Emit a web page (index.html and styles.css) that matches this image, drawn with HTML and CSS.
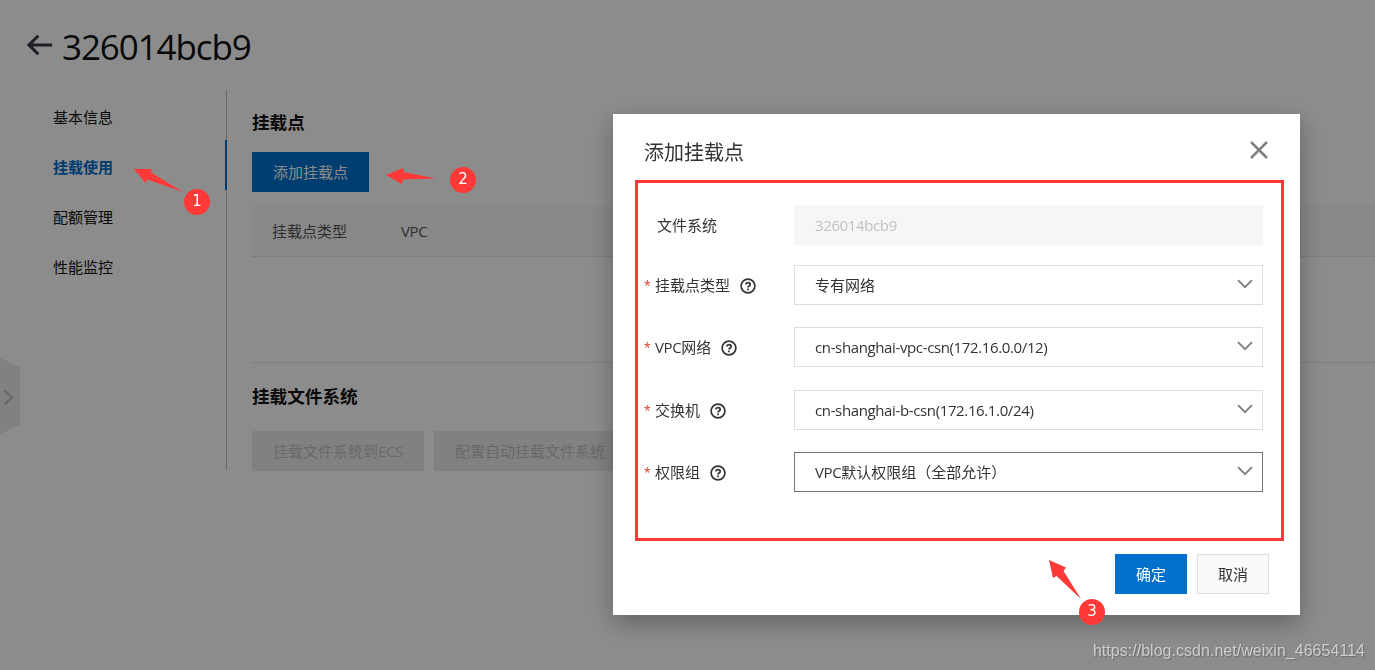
FILE: index.html
```html
<!DOCTYPE html>
<html lang="zh-CN">
<head>
    <meta charset="UTF-8">
    <meta name="viewport" content="width=device-width, initial-scale=1.0">
    <title>添加挂载点</title>
    <link rel="stylesheet" href="styles.css">
</head>
<body>
    <header class="page-header">
        <svg class="back-icon" width="26" height="22" viewBox="0 0 26 22">
            <path d="M1.8 11H25.2M11.3 1.8L2 11l9.3 9.2" fill="none" stroke="#333a44" stroke-width="3"/>
        </svg>
        <h1>326014bcb9</h1>
    </header>

    <div class="layout">
        <nav class="side-nav">
            <a class="nav-item">基本信息</a>
            <a class="nav-item active">挂载使用</a>
            <a class="nav-item">配额管理</a>
            <a class="nav-item">性能监控</a>
        </nav>

        <main class="content">
            <h2>挂载点</h2>
            <button class="btn btn-primary btn-add">添加挂载点</button>
            <div class="table-head">
                <span class="col-type">挂载点类型</span>
                <span class="latin">VPC</span>
            </div>
            <div class="table-body"></div>
            <h2 class="second-title">挂载文件系统</h2>
            <div class="btn-row">
                <button class="btn btn-disabled btn-ecs">挂载文件系统到<span class="latin">ECS</span></button>
                <button class="btn btn-disabled btn-auto">配置自动挂载文件系统</button>
            </div>
        </main>
    </div>

    <!-- collapsed drawer handle -->
    <svg class="drawer-handle" width="20" height="76" viewBox="0 0 20 76">
        <path d="M0 0L20 9V67L0 76Z" fill="#ebebeb"/>
        <path d="M4.5 32.5L12 39.5L4.5 46.5" fill="none" stroke="#b8b8b8" stroke-width="2"/>
    </svg>

    <div class="overlay">
        <div class="modal">
            <div class="modal-header">
                <h3>添加挂载点</h3>
                <svg class="close-icon" width="18" height="18" viewBox="0 0 18 18">
                    <path d="M1 1L17 17M17 1L1 17" fill="none" stroke="#808080" stroke-width="2.5"/>
                </svg>
            </div>

            <div class="modal-body">
                <div class="form-row">
                    <div class="label no-mark">文件系统</div>
                    <div class="field disabled"><span class="latin">326014bcb9</span></div>
                </div>
                <div class="form-row">
                    <div class="label"><span class="required">*</span>挂载点类型<svg class="help" viewBox="0 0 16 16"><circle cx="8" cy="8" r="6.9"/><path d="M5.8 6.5C5.8 4 10.2 4 10.2 6.5C10.2 8 8 8 8 9.5"/><path d="M8 10.6V12.3"/></svg></div>
                    <div class="field"><span>专有网络</span><svg class="arrow" viewBox="0 0 16 10"><path d="M1 1.2L8 8.2L15 1.2"/></svg></div>
                </div>
                <div class="form-row">
                    <div class="label"><span class="required">*</span><span class="latin">VPC</span>网络<svg class="help" viewBox="0 0 16 16"><circle cx="8" cy="8" r="6.9"/><path d="M5.8 6.5C5.8 4 10.2 4 10.2 6.5C10.2 8 8 8 8 9.5"/><path d="M8 10.6V12.3"/></svg></div>
                    <div class="field"><span class="latin">cn-shanghai-vpc-csn(172.16.0.0/12)</span><svg class="arrow" viewBox="0 0 16 10"><path d="M1 1.2L8 8.2L15 1.2"/></svg></div>
                </div>
                <div class="form-row">
                    <div class="label"><span class="required">*</span>交换机<svg class="help" viewBox="0 0 16 16"><circle cx="8" cy="8" r="6.9"/><path d="M5.8 6.5C5.8 4 10.2 4 10.2 6.5C10.2 8 8 8 8 9.5"/><path d="M8 10.6V12.3"/></svg></div>
                    <div class="field"><span class="latin">cn-shanghai-b-csn(172.16.1.0/24)</span><svg class="arrow" viewBox="0 0 16 10"><path d="M1 1.2L8 8.2L15 1.2"/></svg></div>
                </div>
                <div class="form-row">
                    <div class="label"><span class="required">*</span>权限组<svg class="help" viewBox="0 0 16 16"><circle cx="8" cy="8" r="6.9"/><path d="M5.8 6.5C5.8 4 10.2 4 10.2 6.5C10.2 8 8 8 8 9.5"/><path d="M8 10.6V12.3"/></svg></div>
                    <div class="field focused"><span><span class="latin">VPC</span>默认权限组（全部允许）</span><svg class="arrow" viewBox="0 0 16 10"><path d="M1 1.2L8 8.2L15 1.2"/></svg></div>
                </div>
            </div>

            <div class="modal-footer">
                <button class="btn btn-primary">确定</button>
                <button class="btn btn-normal">取消</button>
            </div>
        </div>
    </div>

    <!-- step markers -->
    <div class="frame"></div>
    <svg class="pointers" width="1375" height="670" viewBox="0 0 1375 670">
        <path d="M134 169L152 169L151 172.5L183 192L147 179.5L145.5 183Z"/>
        <path d="M386 175L403 168L403.5 172L436 178.5L402.5 179.5L402 184Z"/>
        <path d="M1049 560L1066 567.5L1063.5 571L1081 599L1056.5 576L1053 578Z"/>
    </svg>
    <span class="step step-1">1</span>
    <span class="step step-2">2</span>
    <span class="step step-3">3</span>

    <div class="watermark">https://blog.csdn.net/weixin_46654114</div>
</body>
</html>
```
FILE: styles.css
```css
* {
    margin: 0;
    padding: 0;
    box-sizing: border-box;
}

body {
    width: 1375px;
    height: 670px;
    overflow: hidden;
    position: relative;
    background: #fff;
    color: #111;
    font-family: "Noto Sans", "Noto Sans CJK SC", sans-serif;
    font-size: 15px;
}

svg {
    display: block;
    flex: none;
}

.latin {
    font-family: "Open Sans", "Noto Sans", sans-serif;
    letter-spacing: -0.37px;
}

.page-header {
    display: flex;
    align-items: center;
    height: 90px;
    padding: 4px 0 0 27px;
}

.page-header h1 {
    margin-left: 9px;
    font-family: "Open Sans", "Noto Sans", sans-serif;
    font-size: 35px;
    font-weight: 400;
    line-height: 50px;
    letter-spacing: -1.1px;
}

.back-icon {
    margin-top: -4px;
}

.layout {
    display: flex;
}

.side-nav {
    width: 227px;
    height: 380px;
    border-right: 1px solid #c0c0c0;
}

.nav-item {
    display: block;
    height: 50px;
    padding-left: 53px;
    line-height: 54px;
}

.nav-item.active {
    margin-right: -1px;
    border-right: 2px solid #0070cc;
    color: #0070cc;
    font-weight: 700;
}

.content {
    flex: 1;
    padding: 19px 0 0 25px;
}

.content h2 {
    font-size: 17.6px;
    font-weight: 700;
    line-height: 26px;
}

.btn {
    height: 40px;
    border: 1px solid transparent;
    font-family: inherit;
    font-size: 15px;
    line-height: 38px;
    white-space: nowrap;
}

.btn-primary {
    background: #0070cc;
    color: #fff;
}

.btn-add {
    display: block;
    width: 117px;
    margin-top: 17px;
}

.table-head {
    display: flex;
    height: 51px;
    margin-top: 14px;
    padding-left: 20px;
    background: #f7f7f7;
    border-bottom: 1px solid #e6e6e6;
    color: #555;
    line-height: 50px;
}

.col-type {
    width: 129px;
}

.table-body {
    height: 106px;
    border-bottom: 1px solid #e6e6e6;
}

.content .second-title {
    margin-top: 20px;
}

.btn-row {
    display: flex;
    gap: 10px;
    margin-top: 22px;
}

.btn-disabled {
    background: #ebebeb;
    color: #bfbfbf;
}

.btn-ecs {
    width: 172px;
}

.btn-auto {
    width: 192px;
}

.drawer-handle {
    position: absolute;
    left: 0;
    top: 358px;
}

.overlay {
    position: fixed;
    inset: 0;
    padding: 114px 75px 55px 613px;
    background: rgba(0, 0, 0, 0.45);
}

.modal {
    width: 687px;
    height: 501px;
    background: #fff;
    color: #333;
    box-shadow: 0 8px 24px rgba(0, 0, 0, 0.3);
}

.modal-header {
    display: flex;
    justify-content: space-between;
    align-items: center;
    height: 75px;
    padding: 2px 32px 0 31px;
}

.modal-header h3 {
    font-size: 20px;
    font-weight: 400;
    line-height: 30px;
}

.close-icon {
    margin-top: -5px;
}

.modal-body {
    display: grid;
    grid-template-rows: 60px 62px 63px 62px 40px;
    padding: 16px 37px 0 31px;
}

.form-row {
    display: flex;
    height: 40px;
}

.label {
    display: flex;
    align-items: center;
    width: 150px;
    line-height: 40px;
}

.label.no-mark {
    padding-left: 13px;
}

.required {
    width: 11px;
    padding-top: 2px;
    color: #e8402f;
    font-size: 12px;
}

.help {
    width: 16px;
    height: 16px;
    margin: 2px 0 0 10px;
}

.help circle,
.help path {
    fill: none;
    stroke: #333;
    stroke-width: 1.7;
}

.field {
    display: flex;
    justify-content: space-between;
    align-items: center;
    width: 469px;
    height: 40px;
    padding: 0 9px 0 20px;
    border: 1px solid #dedede;
    line-height: 38px;
}

.field.disabled {
    background: #f6f6f6;
    border-color: #f6f6f6;
    color: #c1c1c1;
}

.field.focused {
    border-color: #737373;
}

.arrow {
    width: 16px;
    height: 10px;
    margin-top: -2px;
}

.arrow path {
    fill: none;
    stroke: #808080;
    stroke-width: 1.9;
}

.modal-footer {
    display: flex;
    justify-content: flex-end;
    gap: 10px;
    padding: 62px 31px 0 0;
}

.modal-footer .btn {
    width: 72px;
}

.btn-normal {
    background: #fafafa;
    border-color: #dedede;
    color: #333;
}

.frame {
    position: absolute;
    left: 635px;
    top: 180px;
    width: 649px;
    height: 361px;
    border: 3px solid #ff3838;
}

.pointers {
    position: absolute;
    left: 0;
    top: 0;
    fill: #ff3838;
}

.step {
    position: absolute;
    width: 26px;
    height: 26px;
    border-radius: 50%;
    background: #ff3838;
    color: #fff;
    font-family: "DejaVu Sans", sans-serif;
    font-size: 15px;
    line-height: 24px;
    text-align: center;
}

.step-1 {
    left: 184px;
    top: 189px;
}

.step-2 {
    left: 450px;
    top: 167px;
}

.step-3 {
    left: 1079px;
    top: 599px;
}

.watermark {
    position: absolute;
    right: 10px;
    bottom: 9px;
    color: rgba(255, 255, 255, 0.6);
    font-family: "Liberation Sans", Arial, sans-serif;
    font-size: 16px;
    line-height: 20px;
    letter-spacing: 0.03px;
    text-shadow: 1px 1px 1px rgba(0, 0, 0, 0.25);
}
```
